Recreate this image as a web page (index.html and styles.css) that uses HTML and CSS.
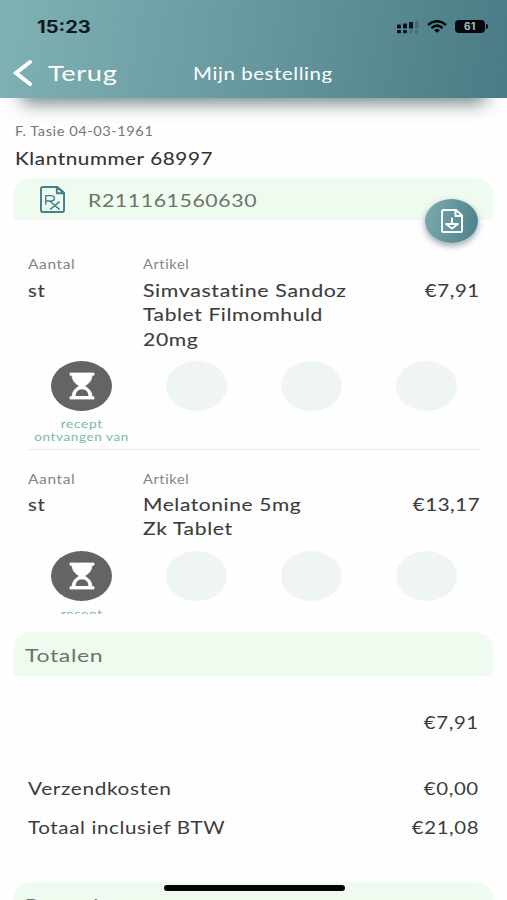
FILE: index.html
```
<!DOCTYPE html>
<html lang="nl">
<head>
<meta charset="utf-8">
<title>Mijn bestelling</title>
<link rel="stylesheet" href="styles.css">
</head>
<body>
<div class="screen">
  <header class="header">
    <div class="status">
      <span class="t time">15:23</span>
      <div class="status-icons">
        <svg class="signal" viewBox="0 0 22 14"><g fill="#0a1116"><rect x="0" y="4.500" width="4" height="4" rx=".8"/><rect x="6" y="3.500" width="4" height="5" rx=".8"/><rect x="12" y="2" width="4" height="6.500" rx=".8"/><rect x="0" y="10" width="4" height="3.300" rx="1"/><rect x="6" y="10" width="4" height="3.300" rx="1"/></g><g fill="#0a1116" opacity=".22"><rect x="18" y="0.500" width="3.500" height="8" rx="1"/><rect x="12.300" y="10.300" width="3" height="3" rx="1"/><rect x="18" y="10.300" width="3" height="3" rx="1"/></g></svg>
        <svg class="wifi" viewBox="0 0 20 13"><g fill="none" stroke="#05090b" stroke-width="2.500"><path d="M1 5Q10-2.600 19 5"/><path d="M4.400 8.100Q10 3.200 15.600 8.100"/></g><path d="M7 10.200Q10 7.700 13 10.200L10 12.700Z" fill="#05090b"/></svg>
        <div class="battery">61</div>
      </div>
    </div>
    <nav class="nav">
      <svg class="chevron" viewBox="0 0 20 28"><path d="M17 3L3 14L17 25" fill="none" stroke="#fff" stroke-width="4" stroke-linecap="round"/></svg>
      <span class="t back">Terug</span>
      <h1 class="t title">Mijn bestelling</h1>
    </nav>
  </header>

  <main class="content">
    <section class="customer">
      <p><span class="t person">F. Tasie 04-03-1961</span></p>
      <p><span class="t number">Klantnummer 68997</span></p>
    </section>

    <section class="order">
      <div class="bar order-bar">
        <svg class="rx" viewBox="0 0 26 28" preserveAspectRatio="none"><g fill="none" stroke="#42808c" stroke-width="2" stroke-linejoin="round" stroke-linecap="round"><path d="M3 1H18L25 7V25Q25 27 23 27H3Q1 27 1 25V3Q1 1 3 1Z"/><path d="M17.500 1V7.500H25Z"/><path d="M6 19V10H11Q15 10 15 12.600Q15 15.500 11 15.500H6M10 15.500L20 24M20 16.500L11 24" stroke-width="1.500"/></g></svg>
        <span class="t rxnum">R211161560630</span>
        <button class="download" aria-label="Download"><svg viewBox="0 0 22 24"><g fill="none" stroke="#fff" stroke-width="2" stroke-linejoin="round" stroke-linecap="round"><path d="M2.500 1H15L21 6.500V21.500Q21 23 19.500 23H2.500Q1 23 1 21.500V2.500Q1 1 2.500 1Z"/><path d="M14.500 1.500V7H20.500"/><path d="M11 9.500V15M5 15H17L11 19.500Z" stroke-width="1.800"/></g></svg></button>
      </div>

      <article class="item item-first">
        <div class="cols">
          <div><p class="label"><span class="t aantal">Aantal</span></p><p class="line"><span class="t st">st</span></p></div>
          <div><p class="label"><span class="t artikel">Artikel</span></p>
            <p class="line"><span class="t l1">Simvastatine Sandoz</span></p>
            <p class="line"><span class="t l2">Tablet Filmomhuld</span></p>
            <p class="line"><span class="t l3">20mg</span></p></div>
          <p class="price"><span class="t amount">€7,91</span></p>
        </div>
        <div class="steps">
          <div class="step"><div class="dot active"><svg viewBox="0 0 26 28"><path d="M1 1H25V3.200H23Q23 10 15.500 14Q23 18 23 24.800H25V27H1V24.800H3Q3 18 10.500 14Q3 10 3 3.200H1Z" fill="#fff" stroke="#fff" stroke-width=".8"/><path d="M6.500 24Q7 17.300 13 17.300Q19 17.300 19.500 24Z" fill="#646464"/></svg></div>
            <p class="caption"><span class="t c1">recept</span></p><p class="caption"><span class="t c2">ontvangen van</span></p></div>
          <div class="step"><div class="dot"></div></div>
          <div class="step"><div class="dot"></div></div>
          <div class="step"><div class="dot"></div></div>
        </div>
      </article>

      <article class="item item-second">
        <div class="cols">
          <div><p class="label"><span class="t aantal">Aantal</span></p><p class="line"><span class="t st">st</span></p></div>
          <div><p class="label"><span class="t artikel">Artikel</span></p>
            <p class="line"><span class="t l4">Melatonine 5mg</span></p>
            <p class="line"><span class="t l5">Zk Tablet</span></p></div>
          <p class="price"><span class="t amount">€13,17</span></p>
        </div>
        <div class="steps">
          <div class="step"><div class="dot active"><svg viewBox="0 0 26 28"><path d="M1 1H25V3.200H23Q23 10 15.500 14Q23 18 23 24.800H25V27H1V24.800H3Q3 18 10.500 14Q3 10 3 3.200H1Z" fill="#fff" stroke="#fff" stroke-width=".8"/><path d="M6.500 24Q7 17.300 13 17.300Q19 17.300 19.500 24Z" fill="#646464"/></svg></div>
            <p class="caption"><span class="t c1">recept</span></p></div>
          <div class="step"><div class="dot"></div></div>
          <div class="step"><div class="dot"></div></div>
          <div class="step"><div class="dot"></div></div>
        </div>
      </article>
    </section>

    <section class="totals">
      <h2 class="bar heading"><span class="t totalen">Totalen</span></h2>
      <div class="row subtotal"><span></span><span class="t amount">€7,91</span></div>
      <div class="row"><span class="t verzend">Verzendkosten</span><span class="t amount">€0,00</span></div>
      <div class="row"><span class="t totaal">Totaal inclusief BTW</span><span class="t amount">€21,08</span></div>
    </section>

    <section class="pay">
      <h2 class="bar heading"><span class="t bezorg">Bezorging</span></h2>
    </section>
  </main>
  <div class="home"></div>
</div>
</body>
</html>
```
FILE: styles.css
```
* { box-sizing: border-box; margin: 0; padding: 0; }
body { background: #fefefe; font-family: Lato, "Noto Sans", sans-serif; color: #3c3c3c; }
.screen { position: relative; width: 507px; height: 900px; overflow: hidden; }
.t { display: inline-block; white-space: nowrap; transform: scaleX(var(--sx, 1.2)); transform-origin: left center; font-weight: 400; letter-spacing: .5px; }
svg { display: block; flex: none; }

.header { position: relative; height: 98px; background: linear-gradient(100deg, #80b1b4 0%, #68999f 48%, #4a7b86 100%); }
.header::after { content: ""; position: absolute; z-index: -1; left: 24px; right: 24px; bottom: 0; height: 40px; box-shadow: 0 3px 18px 2px rgba(50, 75, 80, .7); }
.status { display: flex; justify-content: space-between; height: 48px; padding: 17px 19px 0 37px; }
.time { --sx: 1.18; font: 700 17px/21px Inter, sans-serif; letter-spacing: 0; color: #0a1820; }
.status-icons { display: flex; gap: 8px; align-items: flex-start; padding-top: 3px; }
.signal { width: 22px; height: 14px; }
.wifi { width: 20px; height: 13px; }
.battery { position: relative; width: 30px; height: 13px; margin-right: 3px; border-radius: 4px; background: #05090b; color: #a5c2c8; font: 700 10px/13px Inter, sans-serif; text-align: center; letter-spacing: .5px; }
.battery::after { content: ""; position: absolute; right: -3px; top: 4px; width: 2px; height: 5px; border-radius: 0 2px 2px 0; background: #05090b; }
.nav { display: grid; grid-template-columns: 35px 145px 1fr; align-items: center; height: 49px; padding-left: 13px; color: #fff; }
.chevron { width: 20px; height: 28px; }
.back { --sx: 1.236; font-size: 22px; }
.title { --sx: 1.2; padding-top: 1px; font-size: 17px; }

.customer { height: 80px; padding: 23px 15px 0; }
.person { --sx: 1.165; font-size: 12.5px; line-height: 17px; color: #777; }
.customer p { height: 17px; line-height: 17px; }
.customer p + p { height: 24px; line-height: 24px; margin-top: 9px; }
.number { --sx: 1.215; font-size: 17px; line-height: 24px; color: #333; -webkit-text-stroke: .1px; }

.bar { margin: 0 14px; border-radius: 18px 18px 0 0 / 15px 15px 0 0; background: #f0fbef; }
.order { height: 436px; overflow: hidden; }
.order-bar { position: relative; display: flex; align-items: center; height: 42px; padding-left: 25px; }
.rx { width: 25px; height: 27px; margin: 0 23px 0 1px; }
.rxnum { --sx: 1.182; font-size: 18px; line-height: 24px; padding-top: 1px; color: #6c746c; }
.download { position: absolute; left: 411px; top: 21px; display: grid; place-items: center; width: 53px; height: 44px; border: 0; border-radius: 50%; background: linear-gradient(105deg, #7aacaf, #4d7f89); box-shadow: 0 3px 6px rgba(60, 85, 105, .5); }
.download svg { width: 22px; height: 24px; }

.item { padding: 0 27px 0 28px; }
.item-first { height: 229px; padding-top: 36px; }
.item-first .steps { border-bottom: 1px solid #ebecee; }
.item-first .label { margin-bottom: 6px; }
.item-first .price { padding-top: 23px; }
.item-second { padding-top: 22px; }
.cols { display: grid; grid-template-columns: 115px 1fr 80px; }
.label { height: 17px; font-size: 12.5px; line-height: 17px; color: #858585; margin-bottom: 5px; }
.line { height: 24.400px; font-size: 17px; line-height: 24.400px; }
.line .t, .price .t { -webkit-text-stroke: .1px; }
.price { padding-top: 22px; height: 46px; font-size: 17px; line-height: 24.400px; text-align: right; }
.amount { transform-origin: right center; }
.aantal { --sx: 1.24; }
.artikel { --sx: 1.17; }
.l1 { --sx: 1.256; }
.l2 { --sx: 1.235; }
.l3 { --sx: 1.245; }
.l4 { --sx: 1.23; }
.l5 { --sx: 1.24; }
.steps { display: grid; grid-template-columns: repeat(4, 115px); width: 452px; height: 94px; padding-top: 9px; }
.item-first .steps { height: 98px; }
.step { width: 107px; text-align: center; }
.dot { display: grid; place-items: center; width: 61px; height: 50px; margin: 0 auto 7px; border-radius: 50%; background: #eff5f5; }
.dot.active { background: #646464; }
.dot svg { width: 26px; height: 28px; }
.caption { height: 12.500px; font-size: 11px; line-height: 12.500px; color: #7fb5af; }
.caption .t { transform-origin: center; }
.c1 { --sx: 1.26; }
.c2 { --sx: 1.225; }

.totals { height: 268px; padding-top: 18px; }
.heading { display: flex; align-items: center; height: 44px; padding: 1px 11px 0; font-size: 18px; line-height: 24px; color: #6b746b; }
.totalen { --sx: 1.28; }
.bezorg { --sx: 1.18; }
.row { display: flex; justify-content: space-between; height: 39px; padding: 0 28px; font-size: 17px; line-height: 24px; }
.subtotal { height: 101px; padding-top: 35px; }
.verzend { --sx: 1.226; }
.totaal { --sx: 1.212; }
.pay .heading { padding-top: 1px; }
.home { position: absolute; left: 164px; top: 885px; width: 181px; height: 6px; border-radius: 3px; background: #050505; }
```
